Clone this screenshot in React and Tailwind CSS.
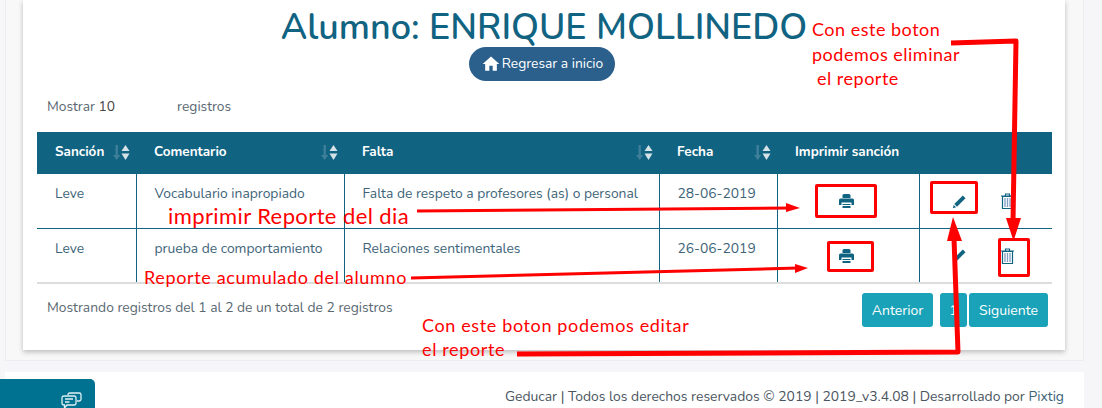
import { MdHome } from "react-icons/md";

const rows = [
  { sancion: "Leve", comentario: "Vocabulario inapropiado", falta: "Falta de respeto a profesores (as) o personal", fecha: "28-06-2019", height: "h-[54px]" },
  { sancion: "Leve", comentario: "prueba de comportamiento", falta: "Relaciones sentimentales", fecha: "26-06-2019", height: "h-[55px]" },
];

const columns = [
  { label: "Sanción", width: "w-[99px]", sort: true },
  { label: "Comentario", width: "w-[208px]", sort: true },
  { label: "Falta", width: "w-[315px]", sort: true },
  { label: "Fecha", width: "w-[118px]", sort: true },
  { label: "Imprimir sanción", width: "w-[142px]", sort: false },
  { label: "", width: "w-[133px]", sort: false },
];

const SortIcon = () => (
  <svg width="18" height="17" viewBox="0 0 18 17" className="shrink-0">
    <path d="M3.500 1h2.400v10h2.400l-3.600 5-3.600-5h2.400z" fill="#3f7f9a" />
    <path d="M13.500 1l4 6h-8z" fill="#d5e2e8" />
    <path d="M13.500 16l4-6.500h-8z" fill="#d5e2e8" />
  </svg>
);

const PrintIcon = () => (
  <svg width="15" height="14" viewBox="0 0 15 14" fill="#116382">
    <path d="M3.500 4V1.500A1.500 1.500 0 0 1 5 0h5a1.500 1.500 0 0 1 1.500 1.500V4z" />
    <path d="M1.500 4.500h12A1.500 1.500 0 0 1 15 6v5h-2.500V8.500h-10V11H0V6a1.500 1.500 0 0 1 1.500-1.500z" />
    <path d="M3.500 10h8v1h-8zM3.500 12h8v2h-8z" />
  </svg>
);

const PencilIcon = () => (
  <svg width="15" height="15" viewBox="0 0 15 15">
    <path d="M10.800 1.500l2.700 2.700L5 12.700 2.300 10z" fill="#116382" />
    <path d="M1.700 10.900l2.400 2.400L0.800 14.200z" fill="#116382" />
  </svg>
);

const TrashIcon = () => (
  <svg width="13" height="16" viewBox="0 0 13 16" fill="none" stroke="#116382">
    <path d="M0 3h13M4.500 3V1h4v2" strokeWidth="1.200" />
    <path d="M1.500 3.500h10V15.500h-10z" strokeWidth="1.200" />
    <path d="M4 5v9M6.500 5v9M9 5v9" stroke="#7f9fc4" strokeWidth="1.300" />
  </svg>
);

const ChatIcon = () => (
  <svg width="21" height="17" viewBox="0 0 21 17" fill="none" stroke="#dff1f5" strokeWidth="1.300">
    <path d="M7 3V2.500A1.800 1.800 0 0 1 8.800 1h9.400A1.800 1.800 0 0 1 20 2.800v4.400A1.800 1.800 0 0 1 18.200 9H16" />
    <path d="M2.800 4h10.400A1.800 1.800 0 0 1 15 5.800v5.400a1.800 1.800 0 0 1-1.800 1.800H6l-2.500 3v-3h-.700A1.800 1.800 0 0 1 1 11.200V5.800A1.800 1.800 0 0 1 2.800 4z" />
    <path d="M4 7h8M4 10h4.500" />
  </svg>
);

const PageButton = ({ children, className }) => (
  <button className={`h-[34px] bg-[#19a2b8] text-white text-[14px] rounded-[3px] ${className}`}>
    {children}
  </button>
);

// notas en rojo encima de la captura
const Note = ({ className, children }) => (
  <span className={`absolute whitespace-pre text-[#ff0000] leading-none font-['Lato',sans-serif] ${className}`}>{children}</span>
);

const Box = ({ className }) => (
  <div className={`absolute border-[3px] border-[#ff0000] rounded-[2px] ${className}`} />
);

const Annotations = () => (
  <>
    <Note className="left-[812px] top-[20px] text-[18px] tracking-[0.5px]">Con este boton</Note>
    <Note className="left-[812px] top-[45px] text-[18px] tracking-[0.5px]">podemos eliminar</Note>
    <Note className="left-[817px] top-[69px] text-[18px] tracking-[0.5px]">el reporte</Note>
    <Note className="left-[168px] top-[205px] text-[22px] tracking-[0.4px]">imprimir Reporte del dia</Note>
    <Note className="left-[144px] top-[268px] text-[18px] tracking-[0.65px]">Reporte acumulado del alumno</Note>
    <Note className="left-[422px] top-[316px] text-[18px] tracking-[0.63px]">Con este boton podemos editar</Note>
    <Note className="left-[422px] top-[340px] text-[18px] tracking-[0.63px]">el reporte</Note>

    <Box className="left-[815px] top-[184px] w-[62px] h-[34px]" />
    <Box className="left-[930px] top-[181px] w-[48px] h-[33px]" />
    <Box className="left-[827px] top-[241px] w-[47px] h-[31px]" />
    <Box className="left-[998px] top-[238px] w-[32px] h-[39px]" />

    <svg width="1102" height="408" className="absolute left-0 top-0 pointer-events-none">
      <path d="M951 43L1016 41L1013 222" fill="none" stroke="#ff0000" strokeWidth="5" strokeLinejoin="round" />
      <path d="M1006 218h15l-7.500 23z" fill="#ff0000" />
      <path d="M417 211L790 208" stroke="#ff0000" strokeWidth="3" />
      <path d="M786 203l14 5-14 4z" fill="#ff0000" />
      <path d="M411 278L798 268" stroke="#ff0000" strokeWidth="3" />
      <path d="M795 264l13 4-13 5z" fill="#ff0000" />
      <path d="M517 354L958 352L954 238" fill="none" stroke="#ff0000" strokeWidth="5" strokeLinejoin="round" />
      <path d="M953 217l9 24h-15z" fill="#ff0000" />
    </svg>
  </>
);

const App = () => {
  return (
    <div className="relative w-[1102px] h-[408px] overflow-hidden bg-[#f6f6f8] font-['Nunito','Noto_Sans',sans-serif] text-[#5a6872]">
      <div className="w-[1079px] h-[361px] ml-[5px] pl-[17px] bg-[#f8f8f8] border-x border-b border-[#ececf1]">
        <div className="w-[1042px] h-[350px] bg-white shadow-[0_2px_5px_rgba(0,0,0,0.25)] pl-[14px] flex flex-col">
          <h1 className="mr-[14px] pt-[3px] text-center text-[#116382] text-[36px] leading-[50px] font-semibold whitespace-nowrap">
            Alumno: ENRIQUE MOLLINEDO
          </h1>
          <div className="mr-[18px] flex justify-center -mt-[6px]">
            <button className="flex items-center justify-center gap-[1px] w-[146px] h-[34px] rounded-full bg-[#2b5f8c] text-white text-[13.800px]">
              <MdHome size={20} />
              Regresar a inicio
            </button>
          </div>
          <div className="flex mt-[16px] pl-[10px] text-[13.800px] leading-[20px] h-[20px]">
            <span>Mostrar <span className="text-[#444]">10</span></span>
            <span className="ml-[62px]">registros</span>
          </div>
          <table className="mt-[15px] w-[1015px] table-fixed border-collapse border-b-2 border-[#dddddd]">
            <thead>
              <tr className="bg-[#116382] text-white h-[42px]">
                {columns.map((col) => (
                  <th key={col.label} className={`${col.width} px-[18px] text-left text-[13.500px] font-bold`}>
                    <div className="flex items-center justify-between -mr-[12px] -mt-[2px]">
                      <span className="whitespace-nowrap">{col.label}</span>
                      {col.sort && <SortIcon />}
                    </div>
                  </th>
                ))}
              </tr>
            </thead>
            <tbody className="text-[#3d6478] text-[13.850px]">
              {rows.map((row) => (
                <tr key={row.fecha} className={`${row.height} border-b border-[#116382] last:border-b-0`}>
                  <td className="pl-[18px] align-top pt-[10px] whitespace-nowrap">{row.sancion}</td>
                  <td className="pl-[18px] align-top pt-[10px] border-l border-[#116382] whitespace-nowrap">{row.comentario}</td>
                  <td className="pl-[18px] align-top pt-[10px] border-l border-[#116382] whitespace-nowrap">{row.falta}</td>
                  <td className="pl-[18px] align-top pt-[10px] border-l border-[#116382] whitespace-nowrap">{row.fecha}</td>
                  <td className="align-top pt-[20px] border-l border-[#116382]">
                    <div className="flex justify-center pr-[4px]"><PrintIcon /></div>
                  </td>
                  <td className="align-top pt-[19px] border-l border-[#116382]">
                    <div className="flex items-center pl-[32px] gap-[34px]">
                      <PencilIcon />
                      <TrashIcon />
                    </div>
                  </td>
                </tr>
              ))}
            </tbody>
          </table>
          <div className="flex items-start justify-between mr-[17px] mt-[9px] pl-[10px]">
            <span className="text-[13.850px] mt-[5px]">Mostrando registros del 1 al 2 de un total de 2 registros</span>
            <div className="flex">
              <PageButton className="w-[71px]">Anterior</PageButton>
              <PageButton className="w-[27px] ml-[7px]">1</PageButton>
              <PageButton className="w-[79px] ml-[2px]">Siguiente</PageButton>
            </div>
          </div>
        </div>
      </div>

      <div className="flex items-start justify-end w-[1079px] h-[36px] ml-[5px] mt-[11px] bg-white">
        <span className="mt-[15px] mr-[20px] text-[13.900px] text-[#4a5560] whitespace-nowrap">
          Geducar | Todos los derechos reservados © 2019 | 2019_v3.4.08 | Desarrollado por <span className="text-[#3d6478]">Pixtig</span>
        </span>
      </div>

      {/* pestaña del chat, fija abajo a la izquierda */}
      <div className="absolute left-0 top-[379px] w-[95px] h-[29px] bg-[#007291] rounded-tr-[5px] flex justify-end pt-[13px] pr-[13px]">
        <ChatIcon />
      </div>

      <Annotations />
    </div>
  );
};

export default App;
